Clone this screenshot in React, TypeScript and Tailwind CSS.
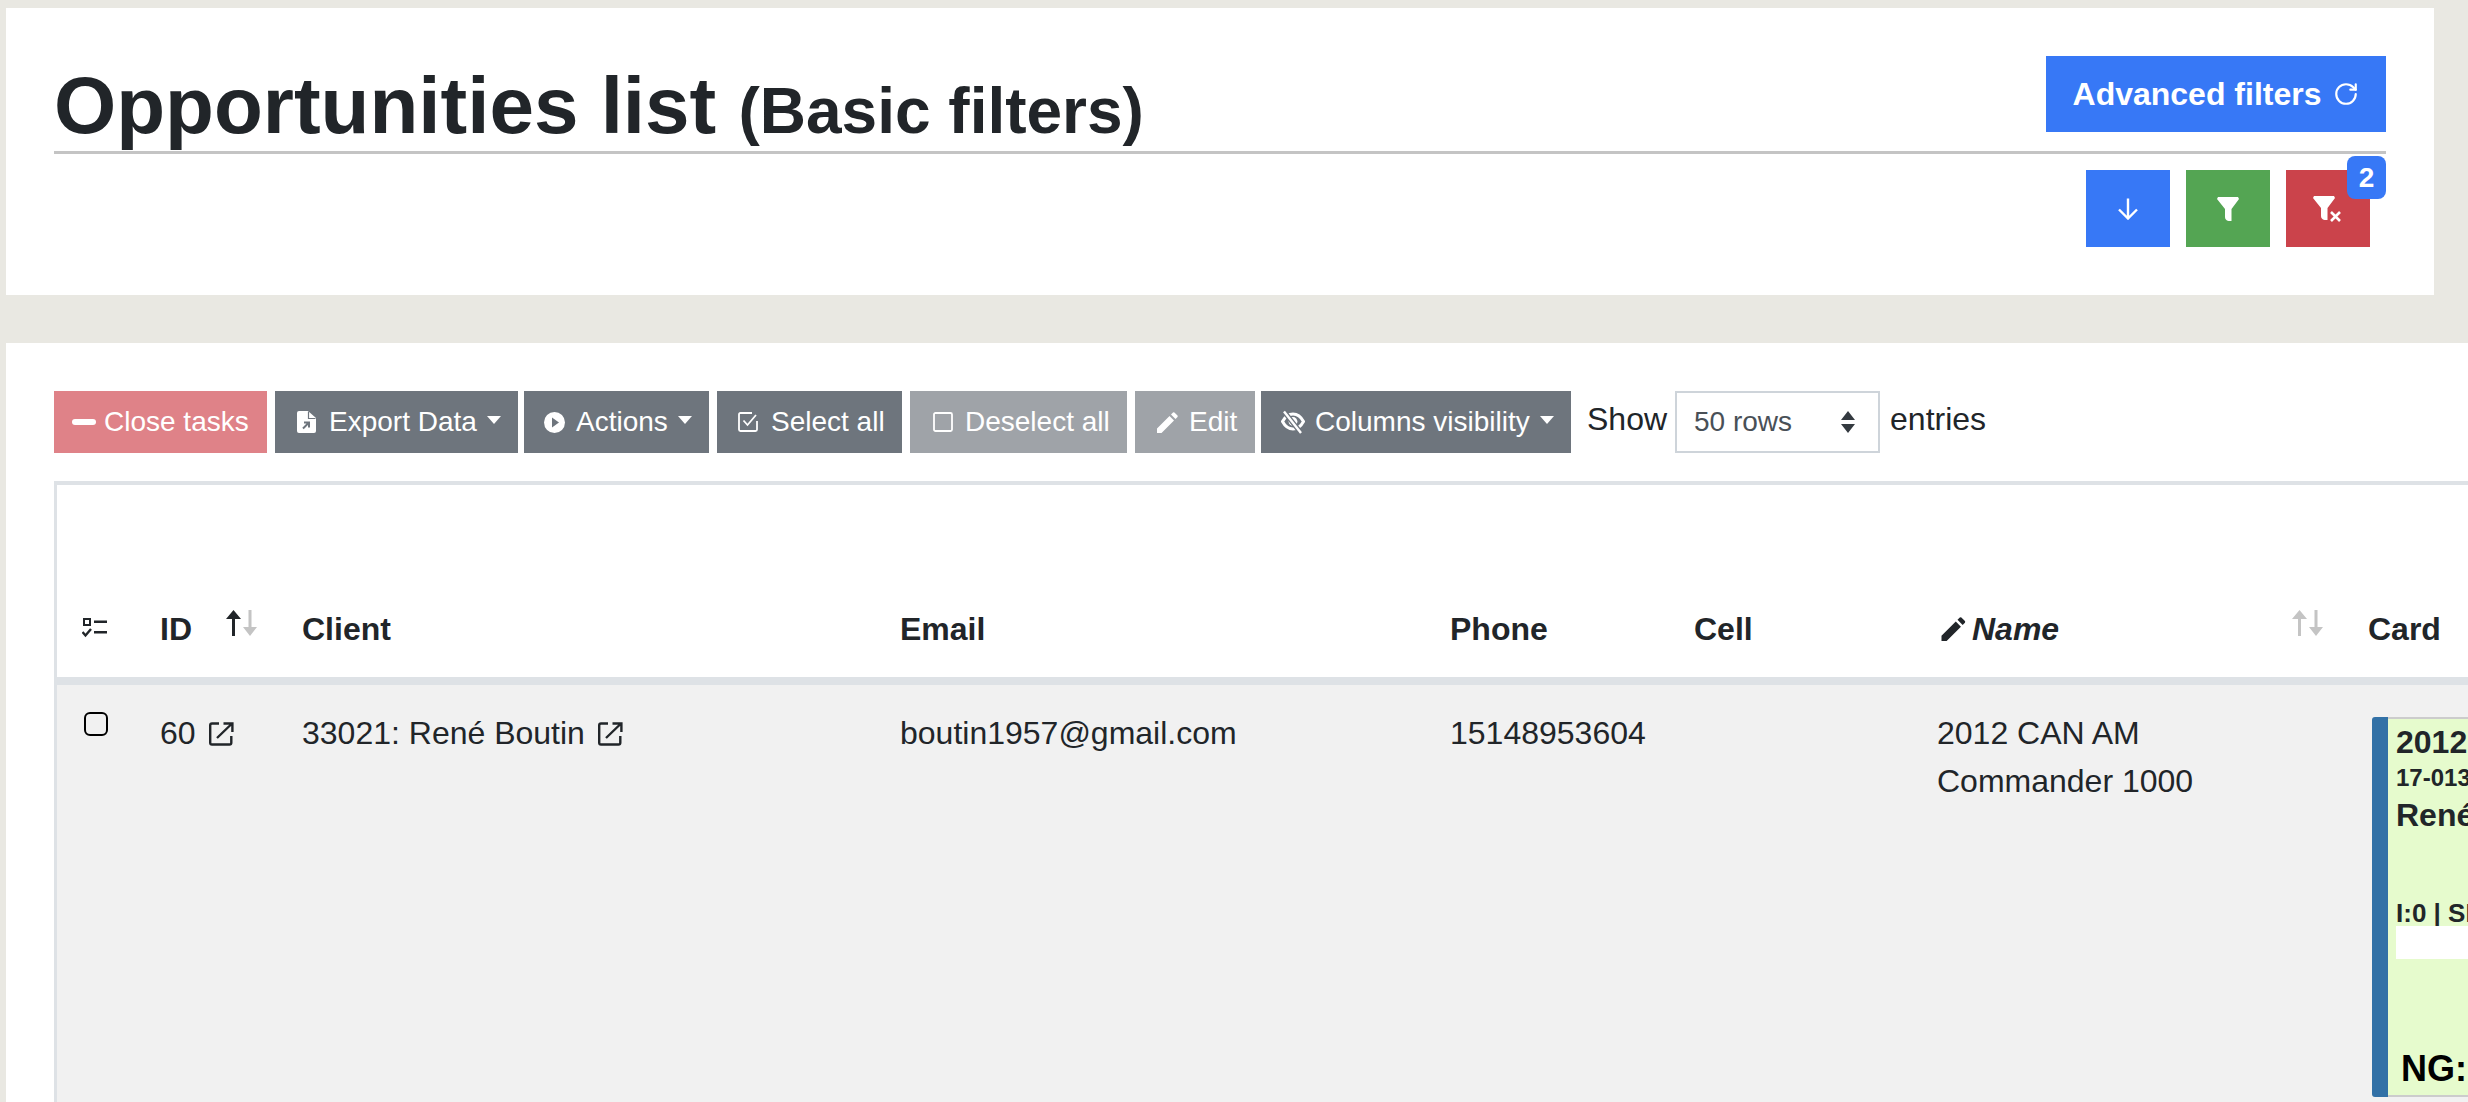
import React from "react";
import { RotateCw } from "lucide-react";

const Caret = () => (
  <svg width="14" height="8" viewBox="0 0 14 8" className="ml-[10px] mb-[4px] shrink-0">
    <path d="M0 0H14L7 8Z" fill="#fff" />
  </svg>
);

const Funnel = () => (
  <svg width="22" height="24" viewBox="0 0 22 24">
    <path d="M1 0H21L22 2L14.5 12V24H11.5Q8 23 8 20V12L0 2Z" fill="#fff" />
  </svg>
);

const FileExport = () => (
  <svg width="19" height="22" viewBox="0 0 19 22" className="shrink-0">
    <path d="M2 0H11L19 7V20Q19 22 17 22H2Q0 22 0 20V2Q0 0 2 0Z" fill="#fff" />
    <path d="M11.5 0.5V7.5H18.5" fill="none" stroke="#6e757d" strokeWidth="1.2" />
    <path d="M6 17.5L11.5 12M7 11.5H12V16.5" fill="none" stroke="#6e757d" strokeWidth="2" />
  </svg>
);

const PlayCircle = () => (
  <svg width="21" height="21" viewBox="0 0 21 21" className="shrink-0">
    <circle cx="10.5" cy="10.5" r="10.5" fill="#fff" />
    <path d="M8 5.5L15 10.5L8 15.5Z" fill="#6e757d" />
  </svg>
);

const CheckedBox = () => (
  <svg width="20" height="20" viewBox="0 0 20 20" className="shrink-0">
    <path d="M14 1H2.5Q1 1 1 2.5V17.5Q1 19 2.5 19H17.5Q19 19 19 17.5V9" fill="none" stroke="#fff" strokeWidth="1.8" />
    <path d="M5.5 8.5L9.5 13L18 3" fill="none" stroke="#fff" strokeWidth="1.8" />
  </svg>
);

const BlankBox = () => (
  <svg width="20" height="20" viewBox="0 0 20 20" className="shrink-0">
    <rect x="1" y="1" width="18" height="18" rx="1.5" fill="none" stroke="#fff" strokeWidth="1.8" />
  </svg>
);

const Pencil = ({ color = "#fff", w = 21, h = 21 }: { color?: string; w?: number; h?: number }) => (
  <svg width={w} height={h} viewBox="0 0 21 21" className="shrink-0">
    <path d="M0 21V16.5L12.5 4L17 8.5L4.5 21Z M14 2.5L16 0.5Q16.7 0 17.4 0.5L20.5 3.6Q21 4.3 20.5 5L18.5 7Z" fill={color} />
  </svg>
);

const EyeOff = () => (
  <svg width="24" height="24" viewBox="0 0 24 24" className="shrink-0">
    <path d="M1.5 11.5C5 5 9 4 12 4s7 1 10.5 7.5C19 18 15 19 12 19S5 18 1.5 11.5Z" fill="none" stroke="#fff" strokeWidth="3" />
    <circle cx="12" cy="11.5" r="4.4" fill="#fff" />
    <path d="M3 1.5L20 23" stroke="#6e757d" strokeWidth="5" />
    <path d="M3 1.5L20 23" stroke="#fff" strokeWidth="2.4" />
  </svg>
);

const SortArrows = ({ up, down }: { up: string; down: string }) => (
  <svg width="31" height="26" viewBox="0 0 31 26" className="shrink-0 mt-[5px]">
    <path d="M0 9L7.5 0L15 9H9V26H6V9Z" fill={up} />
    <path d="M22.5 0H25.5V17H31L24 26L17 17H22.5Z" fill={down} />
  </svg>
);

const ListCheck = () => (
  <svg width="25" height="20" viewBox="0 0 25 20">
    <rect x="2" y="1" width="6" height="6" fill="none" stroke="#212529" strokeWidth="2" />
    <rect x="12" y="2.5" width="13" height="2.5" fill="#212529" />
    <rect x="12" y="13" width="13" height="2.5" fill="#212529" />
    <path d="M0.5 14L3.5 17.5L9 11" fill="none" stroke="#212529" strokeWidth="2.4" />
  </svg>
);

const External = () => (
  <svg width="25" height="24" viewBox="0 0 25 24" className="inline-block ml-[13px] align-[-2px]">
    <path d="M10 1.5H3Q1.2 1.5 1.2 3.3V20.7Q1.2 22.5 3 22.5H20.5Q22.3 22.5 22.3 20.7V14" fill="none" stroke="#212529" strokeWidth="2.4" />
    <path d="M8 16L22 2.5M14.5 1.5H23.4V10" fill="none" stroke="#212529" strokeWidth="2.4" />
  </svg>
);

const tbtn = "flex items-center h-[62px] text-[28px] leading-none text-white shrink-0";
const grey = "bg-[#6e757d]";
const light = "bg-[#9fa3a8]";
const cols = "grid grid-cols-[79px_142px_598px_550px_244px_243px_431px_1fr]";
const headCell = "px-6 pb-6 text-[32px] leading-[48px] font-bold";

export default function App() {
  return (
    <div className="h-[1102px] overflow-hidden bg-[#e9e8e2] pt-2 pl-[6px] text-[#212529] font-['Liberation_Sans',Arial,sans-serif]">
      <section className="w-[2428px] h-[287px] bg-white px-12 pt-12">
        <div className="flex justify-between h-[98px] border-b-[3px] border-[#c4c4c4]">
          <h1 className="font-bold text-[80px] leading-[96px] mt-[2px] whitespace-nowrap">
            Opportunities list <span className="text-[64px]">(Basic filters)</span>
          </h1>
          <button className="flex items-center justify-center w-[340px] h-[76px] bg-[#3778f6] text-white font-bold text-[32px] gap-[12px]">
            Advanced filters
            <RotateCw size={26} strokeWidth={2} />
          </button>
        </div>
        <div className="flex justify-end gap-4 pr-4 mt-4">
          <button className="flex items-center justify-center w-[84px] h-[77px] bg-[#3778f6]">
            <svg width="22" height="22" viewBox="0 0 22 22">
              <path d="M11 0.5V20M2 11.5L11 20.5L20 11.5" fill="none" stroke="#fff" strokeWidth="2.4" />
            </svg>
          </button>
          <button className="flex items-center justify-center w-[84px] h-[77px] bg-[#54a553]">
            <Funnel />
          </button>
          <button className="relative flex items-center justify-center w-[84px] h-[77px] bg-[#cb434b]">
            <span className="flex items-start ml-[-2px]">
              <Funnel />
              <svg width="11" height="11" viewBox="0 0 11 11" className="mt-[15px] ml-[-5px]">
                <path d="M1 1L10 10M10 1L1 10" stroke="#fff" strokeWidth="2.6" />
              </svg>
            </span>
            <span className="absolute top-[-14px] right-[-16px] flex items-center justify-center w-[39px] h-[43px] rounded-lg bg-[#3778f6] text-white font-bold text-[28px] leading-none">
              2
            </span>
          </button>
        </div>
      </section>

      <section className="mt-12 h-[759px] bg-white pl-12 pt-12 overflow-hidden">
        <div className="flex items-center">
          <button className={`${tbtn} bg-[#df8288] w-[213px] pl-[18px]`}>
            <span className="w-6 h-[6px] rounded-full bg-white mr-[8px]" />
            Close tasks
          </button>
          <button className={`${tbtn} ${grey} w-[243px] pl-[22px] ml-2`}>
            <FileExport />
            <span className="ml-[13px]">Export Data</span>
            <Caret />
          </button>
          <button className={`${tbtn} ${grey} w-[185px] pl-5 ml-[6px]`}>
            <PlayCircle />
            <span className="ml-[11px]">Actions</span>
            <Caret />
          </button>
          <button className={`${tbtn} ${grey} w-[185px] pl-[21px] ml-2`}>
            <CheckedBox />
            <span className="ml-[13px]">Select all</span>
          </button>
          <button className={`${tbtn} ${light} w-[217px] pl-[23px] ml-2`}>
            <BlankBox />
            <span className="ml-[12px]">Deselect all</span>
          </button>
          <button className={`${tbtn} ${light} w-[120px] pl-[22px] ml-2`}>
            <Pencil />
            <span className="ml-[11px]">Edit</span>
          </button>
          <button className={`${tbtn} ${grey} w-[310px] pl-5 ml-[6px]`}>
            <EyeOff />
            <span className="ml-[10px]">Columns visibility</span>
            <Caret />
          </button>
          <span className="ml-[16px] text-[32px] leading-[48px] mt-[-6px]">Show</span>
          <div className="flex items-center justify-between w-[205px] h-[62px] ml-[8px] border-2 border-[#ced4da] pl-[17px] pr-[22px] text-[28px] text-[#495057]">
            50 rows
            <svg width="16" height="22" viewBox="0 0 16 22">
              <path d="M8 0L15 9H1Z M8 22L1 13H15Z" fill="#343a40" />
            </svg>
          </div>
          <span className="ml-[10px] text-[32px] leading-[48px] mt-[-6px]">entries</span>
        </div>

        <div className="mt-7 h-[621px] border-t-4 border-l-[3px] border-[#dee2e6]">
          <div className={`${cols} h-[200px] items-end border-b-8 border-[#dee2e6]`}>
            <div className="pl-[25px] pb-[39px]">
              <ListCheck />
            </div>
            <div className={`${headCell} flex items-start justify-between !pr-[21px]`}>
              ID
              <SortArrows up="#212529" down="#c4c4c4" />
            </div>
            <div className={headCell}>Client</div>
            <div className={headCell}>Email</div>
            <div className={headCell}>Phone</div>
            <div className={headCell}>Cell</div>
            <div className={`${headCell} flex items-start justify-between !pr-[21px]`}>
              <span className="flex items-center pl-1">
                <Pencil color="#212529" w={25} h={24} />
                <em className="ml-[6px]">Name</em>
              </span>
              <SortArrows up="#c4c4c4" down="#c4c4c4" />
            </div>
            <div className={headCell}>Card</div>
          </div>

          <div className={`${cols} h-[417px] bg-[#f1f1f1] text-[32px] leading-[48px]`}>
            <div className="pl-[27px] pt-[27px]">
              <input
                type="checkbox"
                readOnly
                className="block appearance-none w-6 h-6 rounded-md border-2 border-black bg-transparent"
              />
            </div>
            <div className="p-6 whitespace-nowrap">
              60
              <External />
            </div>
            <div className="p-6 whitespace-nowrap">
              33021: René Boutin
              <External />
            </div>
            <div className="p-6">boutin1957@gmail.com</div>
            <div className="p-6">15148953604</div>
            <div className="p-6" />
            <div className="p-6">
              2012 CAN AM
              <br />
              Commander 1000
            </div>
            <div className="pl-[28px] pt-8">
              <div className="flex w-[500px] h-[380px]">
                <div className="w-4 rounded-l-[3px] bg-[#3271a6] shrink-0" />
                <div className="flex-1 flex flex-col border-y-2 border-[#cccccc] bg-[#e6fbcd] pl-2 pt-[5px] font-bold">
                  <div className="text-[32px] leading-9">2012 CAN AM Commander</div>
                  <div className="text-2xl leading-[30px] mt-[3px]">17-0138</div>
                  <div className="text-[32px] leading-10 mt-[2px]">René Boutin</div>
                  <div className="text-[26px] leading-[30px] mt-[63px]">I:0 | SI:0</div>
                  <div className="h-[33px] bg-white mt-[-2px]" />
                  <div className="text-[36px] leading-[44px] mt-[88px] ml-[5px] text-black">NG: 0</div>
                </div>
              </div>
            </div>
          </div>
        </div>
      </section>
    </div>
  );
}
